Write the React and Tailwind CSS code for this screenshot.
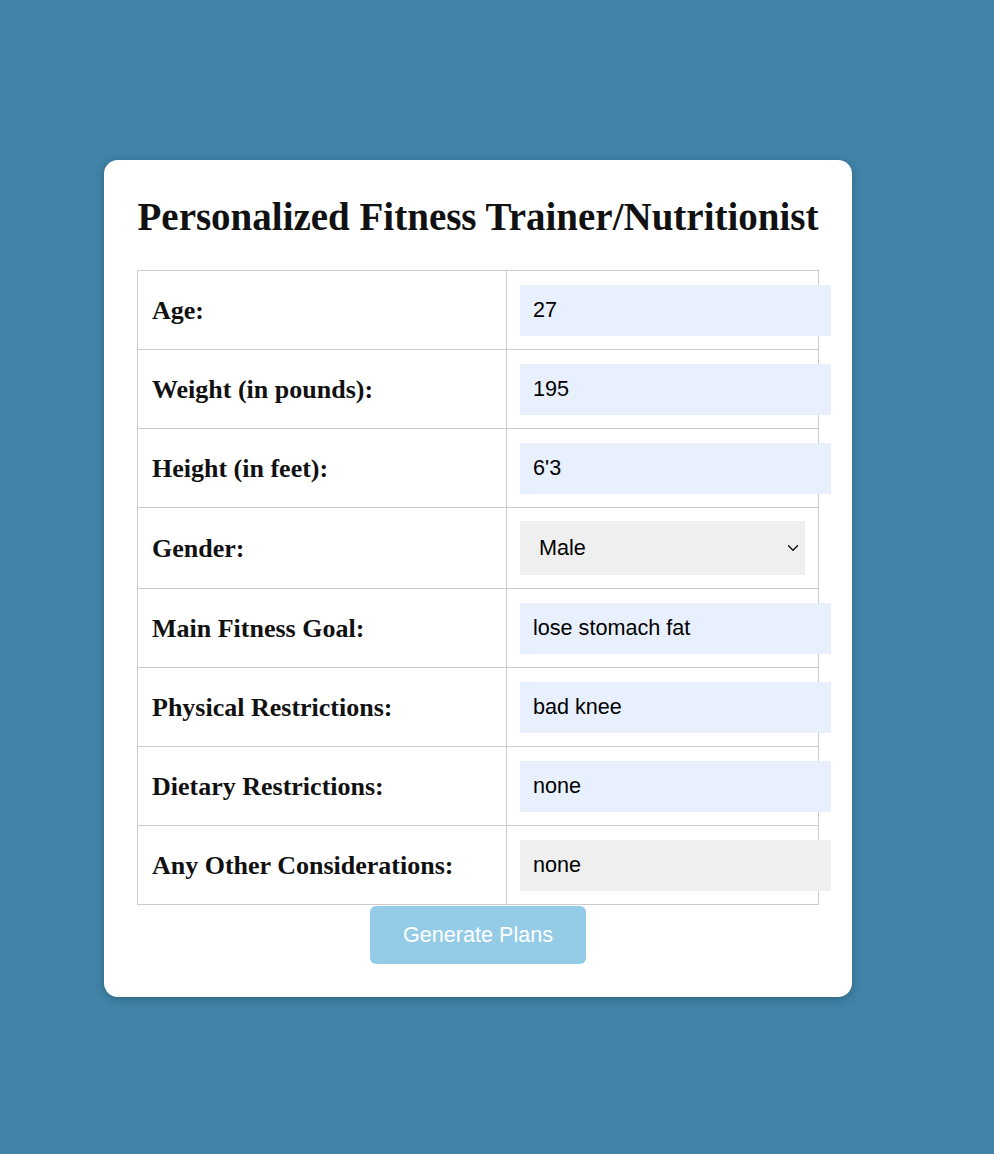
import { ChevronDown } from 'lucide-react';

const ROWS = [
  { label: 'Age:', value: '27' },
  { label: 'Weight (in pounds):', value: '195' },
  { label: 'Height (in feet):', value: "6'3" },
  { label: 'Gender:', value: 'Male', select: true },
  { label: 'Main Fitness Goal:', value: 'lose stomach fat' },
  { label: 'Physical Restrictions:', value: 'bad knee' },
  { label: 'Dietary Restrictions:', value: 'none' },
  { label: 'Any Other Considerations:', value: 'none', plain: true },
];

function Field({ row }) {
  if (row.select) {
    return (
      <div className="flex shrink-0 items-center justify-between w-[285px] h-[54px] bg-[#efefef] pl-[19px] pr-[3px] text-[21.6px] text-black">
        <span>{row.value}</span>
        <ChevronDown size={18} strokeWidth={1.6} className="text-black" />
      </div>
    );
  }
  return (
    <div
      className={
        row.plain
          ? 'flex shrink-0 items-center w-[311px] h-[51px] bg-[#efefef] pl-[13px] text-[21.6px] text-black'
          : 'flex shrink-0 items-center w-[311px] h-[51px] bg-[#e8f0fe] pl-[13px] text-[21.6px] text-black'
      }
    >
      {row.value}
    </div>
  );
}

export default function App() {
  return (
    <div className="min-h-[1154px] w-full bg-[#4084a8] pt-[160px] pl-[104px] font-['Liberation_Sans',Arial,sans-serif]">
      <div className="w-[748px] h-[837px] bg-white rounded-[14px] shadow-[0_2px_10px_rgba(0,0,0,0.25)] px-[33px] pt-[30px] pb-[33px] flex flex-col">
        <h1 className="text-center font-bold text-[39px] leading-[54px] text-[#111] font-['Liberation_Serif','Times_New_Roman',serif] mb-[26px]">
          Personalized Fitness Trainer/Nutritionist
        </h1>
        <div className="w-[682px] border-t border-l border-[#cccccc]">
          {ROWS.map((row) => (
            <div
              key={row.label}
              className={
                row.select
                  ? 'flex h-[81px] border-b border-[#cccccc]'
                  : 'flex h-[79px] border-b border-[#cccccc]'
              }
            >
              <div className="w-[369px] shrink-0 border-r border-[#cccccc] flex items-center pl-[14px] font-bold text-[26px] text-[#111] font-['Liberation_Serif','Times_New_Roman',serif]">
                {row.label}
              </div>
              <div className="w-[312px] shrink-0 border-r border-[#cccccc] flex items-center pl-[13px] overflow-visible">
                <Field row={row} />
              </div>
            </div>
          ))}
        </div>
        <div className="flex justify-center mt-[1px]">
          <button className="w-[216px] h-[58px] rounded-[6px] bg-[#94cce8] text-white text-[21.6px]">
            Generate Plans
          </button>
        </div>
      </div>
    </div>
  );
}
